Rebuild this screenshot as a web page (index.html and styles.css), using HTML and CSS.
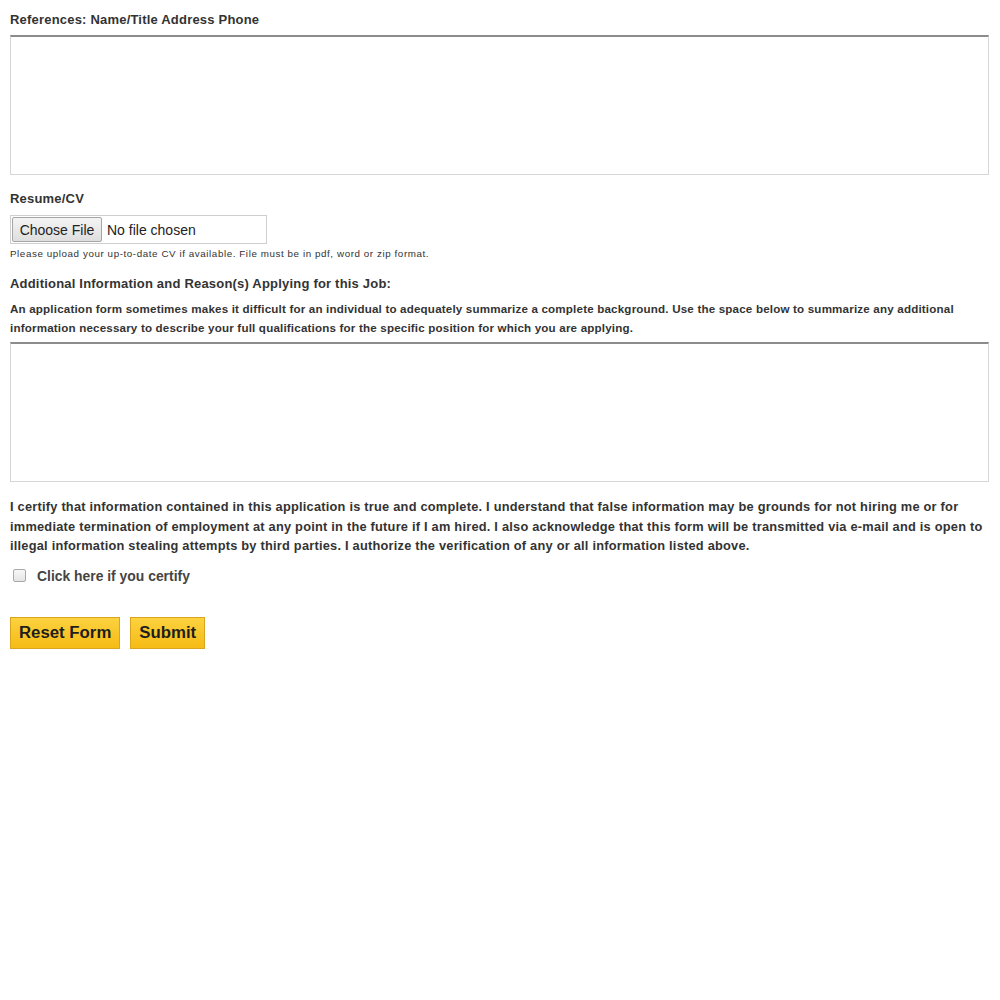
FILE: index.html
```html
<!DOCTYPE html>
<html>
<head>
<meta charset="utf-8">
<link rel="stylesheet" href="styles.css">
</head>
<body>
<form class="form">
  <div class="label first">References: Name/Title Address Phone</div>
  <div class="textarea"></div>

  <div class="label resume">Resume/CV</div>
  <div class="file">
    <span class="file-btn">Choose File</span>
    <span class="file-name">No file chosen</span>
  </div>
  <div class="hint">Please upload your up-to-date CV if available. File must be in pdf, word or zip format.</div>

  <div class="label additional">Additional Information and Reason(s) Applying for this Job:</div>
  <p class="desc">An application form sometimes makes it difficult for an individual to adequately summarize a complete background. Use the space below to summarize any additional information necessary to describe your full qualifications for the specific position for which you are applying.</p>
  <div class="textarea"></div>

  <p class="certify">I certify that information contained in this application is true and complete. I understand that false information may be grounds for not hiring me or for immediate termination of employment at any point in the future if I am hired. I also acknowledge that this form will be transmitted via e-mail and is open to illegal information stealing attempts by third parties. I authorize the verification of any or all information listed above.</p>

  <label class="check">
    <span class="box"></span>
    <span class="check-text">Click here if you certify</span>
  </label>

  <div class="buttons">
    <span class="btn">Reset Form</span>
    <span class="btn">Submit</span>
  </div>
</form>
</body>
</html>
```
FILE: styles.css
```css
html, body {
  margin: 0;
  background: #fff;
}
body {
  padding: 11px 11px 0 10px;
  font-family: "Liberation Sans", Arial, sans-serif;
  color: #333;
}
.form {
  display: flex;
  flex-direction: column;
  align-items: flex-start;
}
.label {
  font-size: 13px;
  font-weight: bold;
  line-height: 16px;
  letter-spacing: 0.2px;
  color: #333;
}
.first {
  padding-top: 1px;
}
.textarea {
  align-self: stretch;
  height: 137px;
  border: 1px solid #d6d6d6;
  border-top: 2px solid #8c8c8c;
  margin-top: 8px;
  background: #fff;
}
.first + .textarea {
  margin-top: 7px;
}
.resume {
  margin-top: 16px;
}
.file {
  margin-top: 8px;
  width: 255px;
  height: 27px;
  border: 1px solid #cfcfcf;
  display: flex;
  align-items: center;
  font-size: 14px;
  color: #222;
}
.file-btn {
  margin-left: 1px;
  height: 23px;
  width: 88px;
  display: flex;
  align-items: center;
  justify-content: center;
  border: 1px solid #a6a6a6;
  border-radius: 2px;
  background: linear-gradient(#f4f4f4, #dedede);
  color: #222;
}
.file-name {
  margin-left: 5px;
}
.hint {
  margin-top: 4px;
  font-size: 9.8px;
  line-height: 12px;
  color: #333;
  letter-spacing: 0.58px;
}
.additional {
  margin-top: 16px;
}
.desc {
  margin: 7px 0 0;
  font-size: 11.6px;
  font-weight: bold;
  line-height: 19px;
  letter-spacing: 0.18px;
  color: #333;
}
.desc + .textarea {
  margin-top: 5px;
}
.certify {
  margin: 15px 0 0;
  font-size: 12.8px;
  font-weight: bold;
  line-height: 19.5px;
  letter-spacing: 0.23px;
  color: #333;
}
.check {
  margin-top: 11px;
  display: flex;
  align-items: center;
  padding-left: 3px;
}
.box {
  width: 11px;
  height: 11px;
  border: 1px solid #a9a9a9;
  border-radius: 2px;
  background: linear-gradient(#f8f8f8, #e4e4e4);
}
.check-text {
  margin-left: 11px;
  font-size: 13.9px;
  font-weight: bold;
  line-height: 18px;
  color: #444;
}
.buttons {
  margin-top: 32px;
  display: flex;
  gap: 10px;
}
.btn {
  height: 30px;
  padding: 0 8px;
  display: flex;
  align-items: center;
  border: 1px solid #d9a521;
  background: linear-gradient(#fcd23f, #f6bb15);
  font-size: 16.8px;
  font-weight: bold;
  color: #1e1e1e;
}
```
